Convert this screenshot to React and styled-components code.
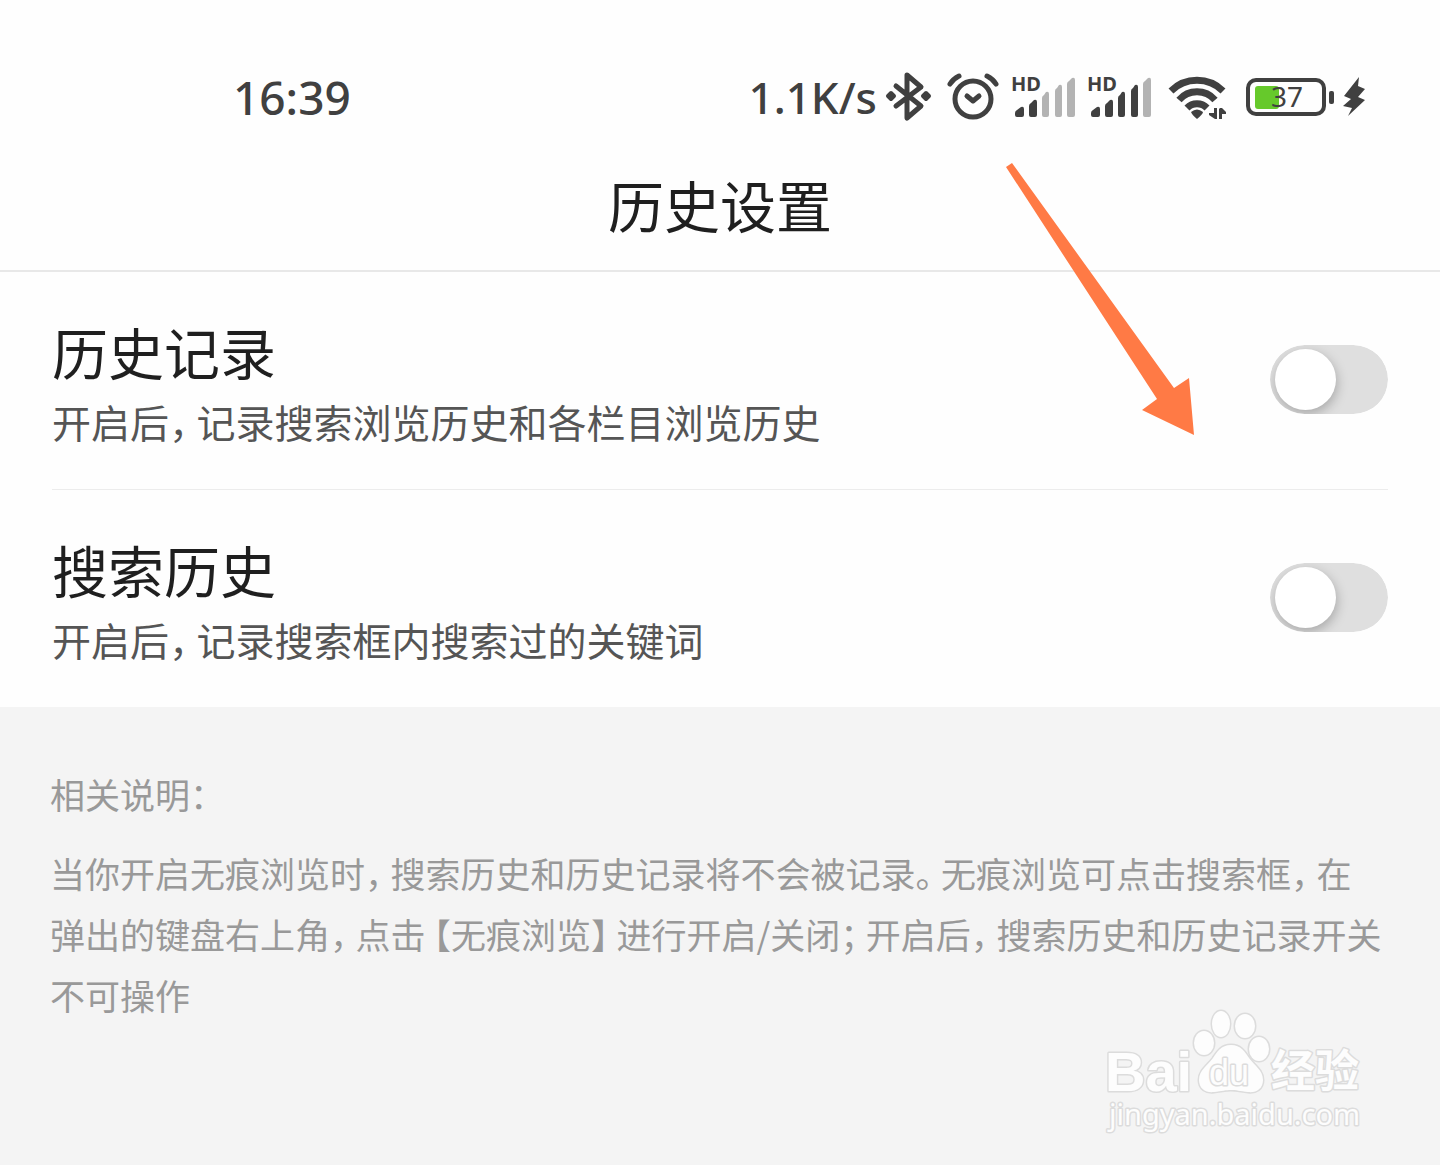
import React, { Fragment, useState } from "react";
import styled, { createGlobalStyle } from "styled-components";

const cjk = '"Noto Sans CJK SC", "Noto Sans", sans-serif';
const latin = '"Noto Sans", "Noto Sans CJK SC", sans-serif';
const ink = "#404040";

const GlobalStyle = createGlobalStyle`
  *, *::before, *::after { box-sizing: border-box; }
  body { margin: 0; background: #fff; font-family: ${cjk}; }
  h1, h2, p { margin: 0; font-weight: 400; }
`;

const Page = styled.div`
  position: relative;
  display: flex;
  flex-direction: column;
  min-height: 100vh;
  background: #fefefe;
`;

const StatusBar = styled.div`
  display: flex;
  align-items: center;
  justify-content: space-between;
  padding: 65px 74px 1px 233px;
  color: ${ink};
  font-family: ${latin};
  font-weight: 500;
  line-height: 64px;
`;

const Clock = styled.time`
  font-size: 46px;
`;

const Indicators = styled.div`
  display: flex;
  align-items: center;
  gap: 12px;
`;

const Speed = styled.span`
  font-size: 44px;
`;

const Glyph = styled.svg`
  display: block;
  flex: none;
  overflow: visible;
  margin-left: ${(p) => p.$lead || 0}px;
`;

const HdLabel = styled.text`
  font: 700 20px ${latin};
  fill: ${ink};
`;

const ChargeLabel = styled.text`
  font: 400 28px ${latin};
  fill: ${ink};
`;

const TitleBar = styled.header`
  padding: 34px 52px 26px;
  border-bottom: 2px solid #e8e8e8;
  text-align: center;
`;

const Title = styled.h1`
  font-size: 56px;
  line-height: 80px;
  color: #1f1f1f;
`;

const Settings = styled.main`
  padding: 0 52px;
`;

const Row = styled.section`
  display: flex;
  align-items: center;
  justify-content: space-between;
  gap: 32px;
  padding: 35px 0 42px;

  & + & { border-top: 1px solid #ececec; }
`;

const RowLabel = styled.label`
  display: block;
  font-size: 56px;
  line-height: 88px;
  color: #1f1f1f;
`;

const RowHint = styled.p`
  font-size: 39px;
  line-height: 52px;
  color: #555;
`;

const Switch = styled.input`
  appearance: none;
  position: relative;
  flex: none;
  width: 118px;
  height: 69px;
  margin: 5px 0 0;
  border-radius: 35px;
  background: ${(p) => (p.checked ? "#4e6ef2" : "#dfdfdf")};
  clip-path: inset(0 round 35px);
  cursor: pointer;

  &::before {
    content: "";
    position: absolute;
    top: 4px;
    left: ${(p) => (p.checked ? 52 : 5)}px;
    width: 61px;
    height: 61px;
    border-radius: 50%;
    background: #fff;
    box-shadow: 1px 4px 12px rgba(0, 0, 0, 0.25);
  }
`;

const Notes = styled.footer`
  flex: 1;
  padding: 56px 56px 140px 50px;
  background: #f4f4f4;
  color: #999;
  font-size: 35px;
  line-height: 61px;
`;

const NotesTitle = styled.h2`
  margin-bottom: 18px;
  font-size: 35px;
  line-height: 61px;
`;

const Mark = styled.span`
  padding: ${(p) => (p.$opening ? "0 0 0 8px" : "0 8px 0 0")};
  font-feature-settings: "halt";
`;

const Pointer = styled.svg`
  position: absolute;
  top: 163px;
  right: 246px;
  pointer-events: none;
`;

const Watermark = styled.svg`
  position: absolute;
  right: 70px;
  bottom: 25px;
  overflow: visible;
  pointer-events: none;
  fill: #fdfdfd;
  stroke: #dcdcdc;
  stroke-width: 3px;
  stroke-linejoin: round;
  paint-order: stroke;
`;

const MarkText = styled.text`
  font: ${(p) => p.$font};
`;

/* Full-width punctuation is set three quarters of an em wide; "|" is a soft break. */
function Text({ children }) {
  return children.split(/([，。；：【】|])/).map((part, i) => {
    if (part === "|") return <wbr key={i} />;
    if (i % 2) return <Mark key={i} $opening={part === "【"}>{part}</Mark>;
    return <Fragment key={i}>{part}</Fragment>;
  });
}

function Bluetooth() {
  return (
    <Glyph width="46" height="50" viewBox="0 0 46 50" $lead={-4} aria-label="蓝牙">
      <path d="M11 14 36 34 22 46V3L36 15 11 34" fill="none" stroke={ink} strokeWidth="5" strokeLinecap="round" strokeLinejoin="round" />
      <path d="M6 21 9 24 6 27 3 24ZM41 21 44 24 41 27 38 24Z" fill={ink} stroke={ink} strokeWidth="4" strokeLinejoin="round" />
    </Glyph>
  );
}

function Alarm() {
  return (
    <Glyph width="52" height="50" viewBox="0 0 52 50" $lead={4} aria-label="闹钟">
      <g fill="none" stroke={ink} strokeWidth="5" strokeLinecap="round" strokeLinejoin="round">
        <circle cx="26" cy="27" r="18" />
        <path d="M3 12Q6 7 12 4M40 4Q46 7 49 12M20 24 26 29 32 24" />
      </g>
    </Glyph>
  );
}

const bars = [
  [4, 9, 33],
  [18, 8, 26],
  [31, 7, 18],
  [44, 7, 11],
  [56, 8, 4],
];

function Signal({ level, lead }) {
  return (
    <Glyph width="66" height="46" viewBox="0 0 66 46" $lead={lead} aria-label="信号">
      <HdLabel x="0" y="17">HD</HdLabel>
      {bars.map(([x, w, y], i) => (
        <path
          key={x}
          d={`M${x} ${y + 6}Q${x} ${y + 4} ${x + 2} ${y + 3}L${x + w - 3} ${y}Q${x + w} ${y - 1} ${x + w} ${y + 2}V41Q${x + w} 43 ${x + w - 2} 43H${x + 2}Q${x} 43 ${x} 41Z`}
          fill={i < level ? ink : "#b3b3b3"}
        />
      ))}
    </Glyph>
  );
}

function Wifi() {
  return (
    <Glyph width="60" height="46" viewBox="0 0 60 46" $lead={2} aria-label="无线网络">
      <path d="M4 17A37 37 0 0 1 56 17M12 26A24 24 0 0 1 48 26M20 34A14 14 0 0 1 40 34" fill="none" stroke={ink} strokeWidth="7" />
      <path d="M24 38Q30 33 36 38Q36 40 30 45Q25 41 24 38Z" fill={ink} />
      <path d="M47 34H50V45H48L42 41V39H47ZM53 34H55L59 38V40H55V45H52V35Z" fill={ink} />
    </Glyph>
  );
}

function Battery() {
  return (
    <Glyph width="88" height="40" viewBox="0 0 88 40" $lead={7} aria-label="电量">
      <rect x="2" y="3" width="76" height="34" rx="8" fill="none" stroke={ink} strokeWidth="4" />
      <rect x="83" y="14" width="5" height="13" rx="2" fill={ink} />
      <rect x="9" y="9" width="24" height="23" rx="3" fill="#66c92b" />
      <ChargeLabel x="25" y="30">37</ChargeLabel>
    </Glyph>
  );
}

function Bolt() {
  return (
    <Glyph width="24" height="40" viewBox="0 0 24 40" $lead={-4} aria-label="充电中">
      <path d="M17 0 2 19 9 22 1 29 10 31 6 39 23 23 16 20 23 12 16 9Z" fill={ink} />
    </Glyph>
  );
}

const options = [
  { id: "records", label: "历史记录", hint: "开启后，记录搜索浏览历史和各栏目浏览历史" },
  { id: "searches", label: "搜索历史", hint: "开启后，记录搜索框内搜索过的关键词" },
];

function Option({ id, label, hint }) {
  const [on, setOn] = useState(false);
  return (
    <Row>
      <div>
        <RowLabel htmlFor={id}>{label}</RowLabel>
        <RowHint><Text>{hint}</Text></RowHint>
      </div>
      <Switch id={id} type="checkbox" role="switch" checked={on} onChange={() => setOn(!on)} />
    </Row>
  );
}

export default function App() {
  return (
    <Page>
      <GlobalStyle />
      <StatusBar>
        <Clock>16:39</Clock>
        <Indicators>
          <Speed>1.1K/s</Speed>
          <Bluetooth />
          <Alarm />
          <Signal level={2} />
          <Signal level={4} lead={-2} />
          <Wifi />
          <Battery />
          <Bolt />
        </Indicators>
      </StatusBar>
      <TitleBar>
        <Title>历史设置</Title>
      </TitleBar>
      <Settings>
        {options.map((o) => <Option key={o.id} {...o} />)}
      </Settings>
      <Notes>
        <NotesTitle><Text>相关说明：</Text></NotesTitle>
        <p>
          <Text>当你开启无痕浏览时，搜索历史和历史记录将不会被记录。无痕浏览可点击搜索框，在|弹出的键盘右上角，点击【无痕浏览】进行开启/关闭；开启后，搜索历史和历史记录开关|不可操作</Text>
        </p>
      </Notes>
      <Pointer width="190" height="274" viewBox="0 0 190 274" aria-hidden="true">
        <path d="M2 4 8 0 170 225 185 215 190 272 138 247 153 236Z" fill="#ff7a45" />
      </Pointer>
      <Watermark width="270" height="135" viewBox="0 0 270 135">
        <MarkText x="5" y="86" $font='700 56px "Liberation Sans", sans-serif'>Bai</MarkText>
        <ellipse cx="104" cy="38" rx="10" ry="12" />
        <ellipse cx="121" cy="19" rx="9" ry="13" />
        <ellipse cx="145" cy="21" rx="10" ry="12" />
        <ellipse cx="159" cy="44" rx="10" ry="12" />
        <path d="M131 40C141 40 145 47 149 53C154 60 163 65 163 75C163 84 156 88 148 87C140 86 136 85 131 85C126 85 122 86 114 87C106 88 99 84 99 75C99 65 108 60 113 53C117 47 121 40 131 40Z" />
        <MarkText x="109" y="80" $font='400 36px "Liberation Sans", sans-serif'>du</MarkText>
        <MarkText x="171" y="82" $font={`700 44px ${cjk}`}>经验</MarkText>
        <MarkText x="9" y="120" $font={`400 29px ${latin}`}>jingyan.baidu.com</MarkText>
      </Watermark>
    </Page>
  );
}
